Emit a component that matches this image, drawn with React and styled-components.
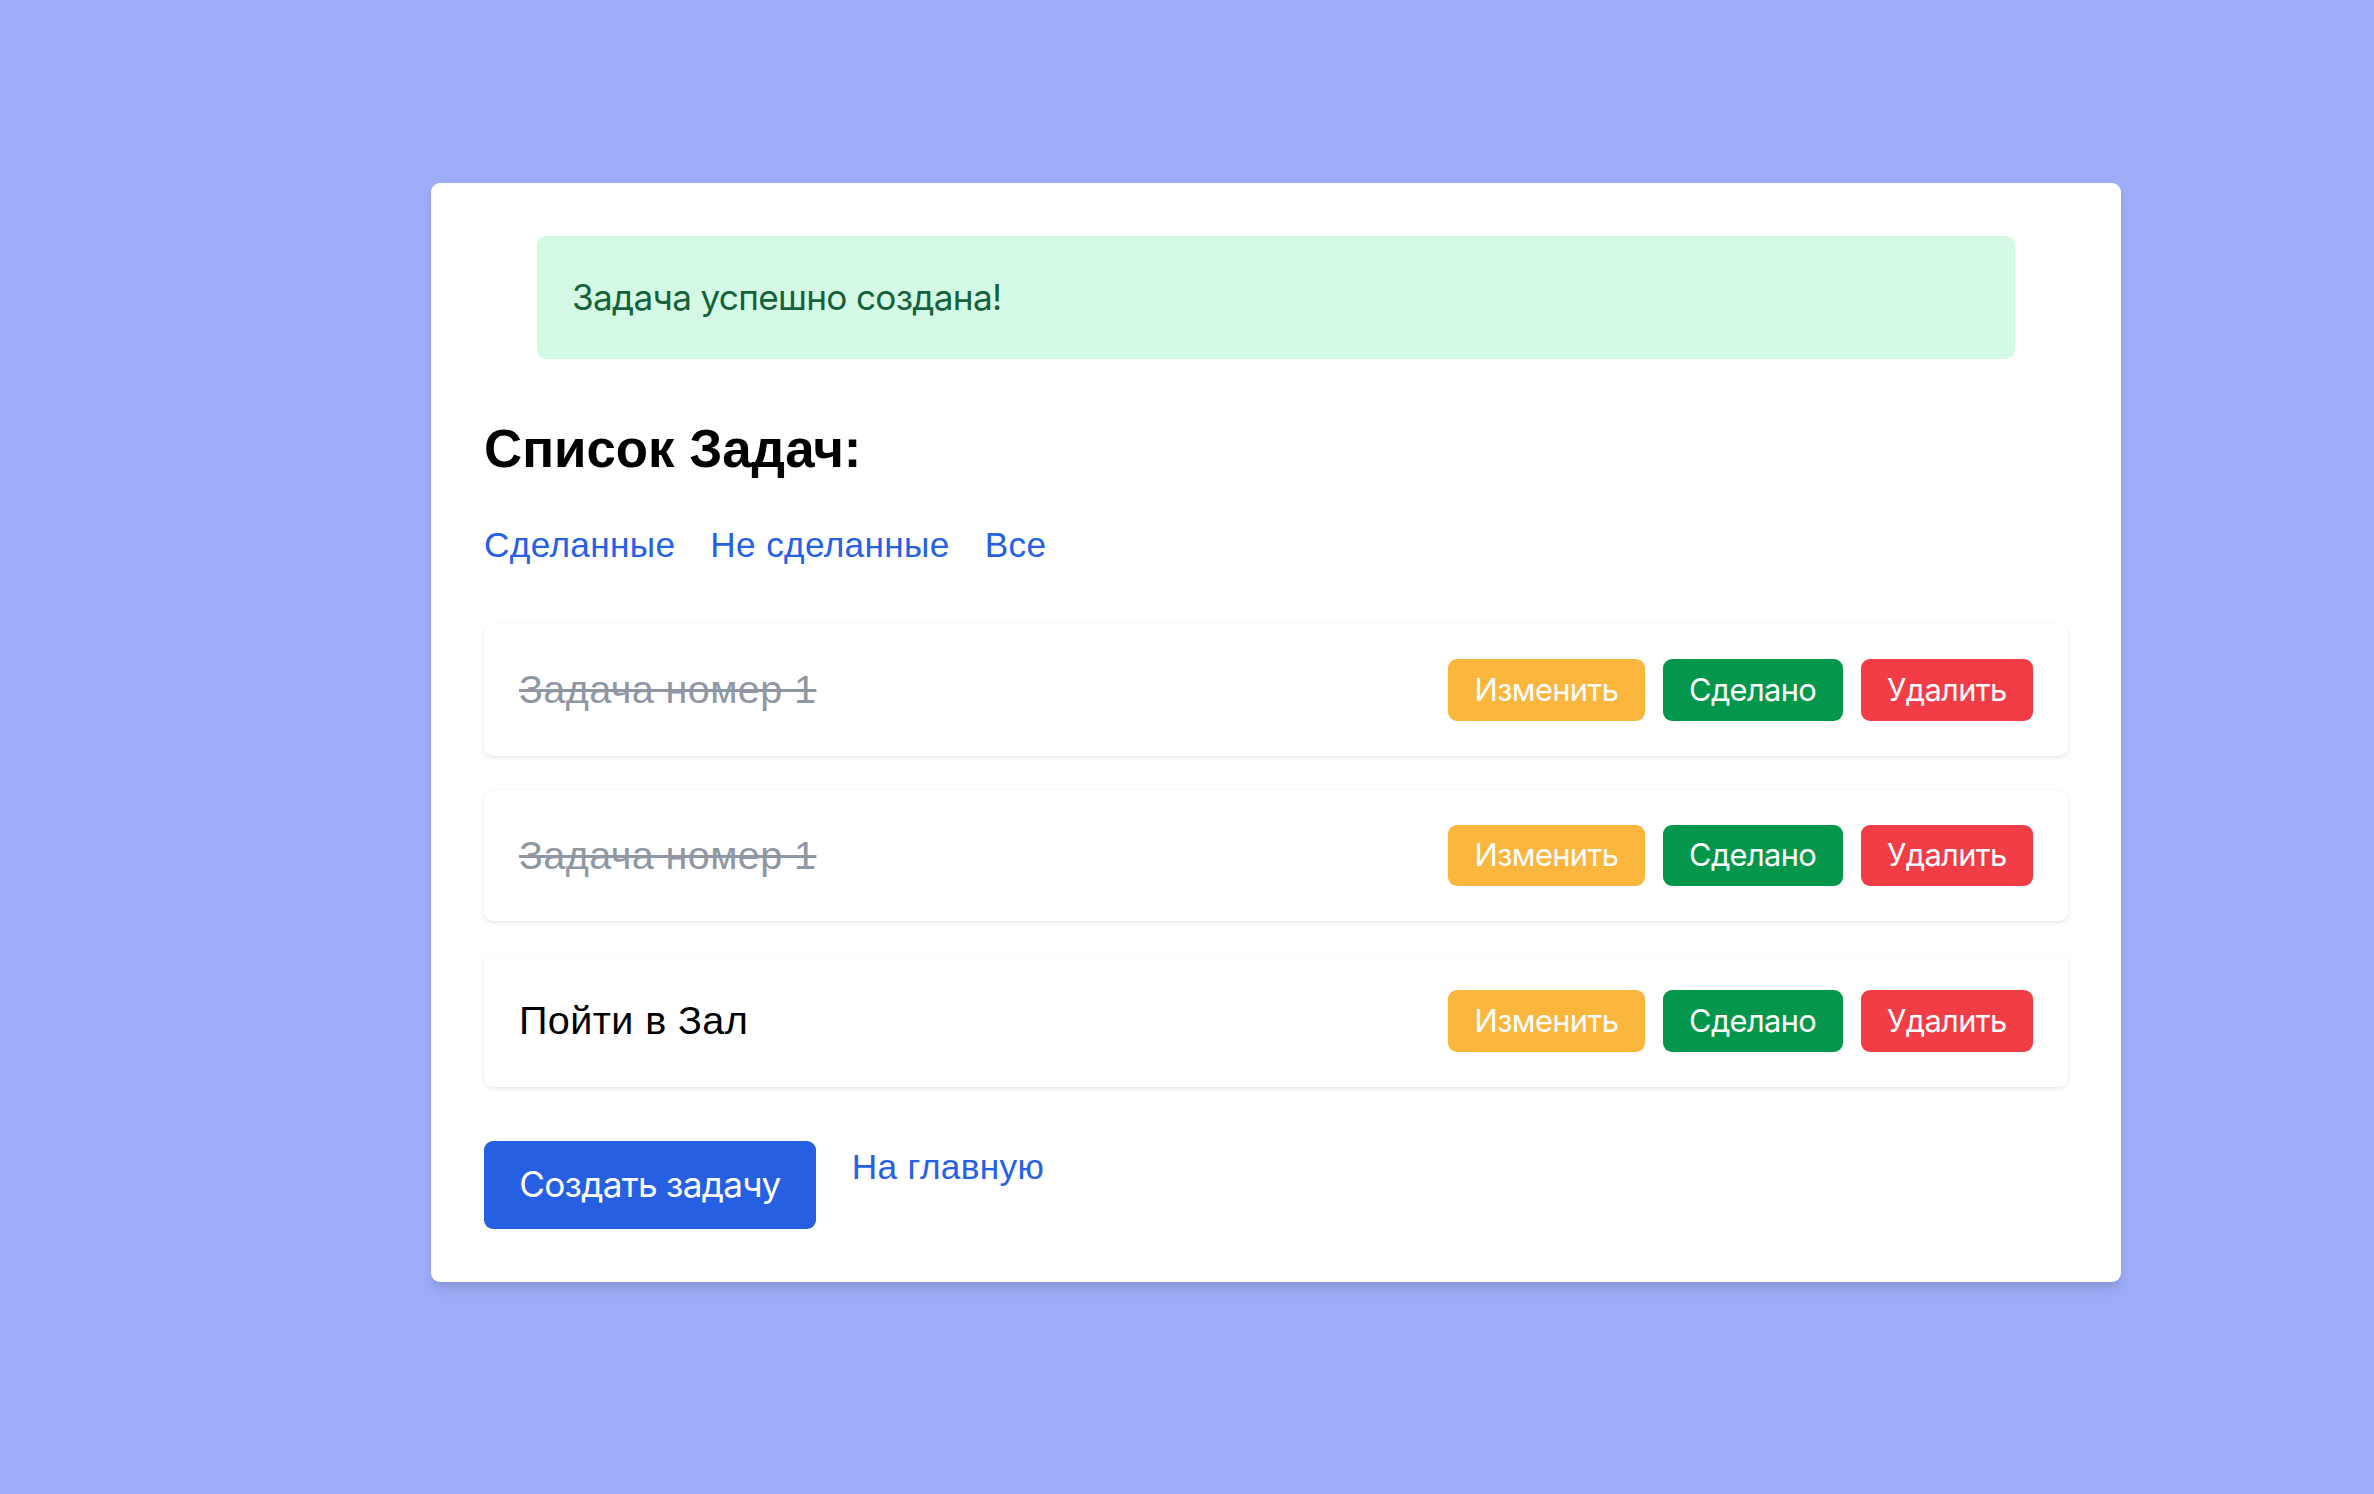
import React, { useState } from 'react';
import styled, { createGlobalStyle } from 'styled-components';

const GlobalStyle = createGlobalStyle`
  html, body {
    margin: 0;
    padding: 0;
    background: #9dacf7;
    min-height: 100%;
  }
  body {
    font-family: 'Liberation Sans', Arial, sans-serif;
  }
`;

const Page = styled.div`
  min-height: 100vh;
  padding: 183px 0 0 431px;
  box-sizing: border-box;
`;

const Card = styled.div`
  width: 1690px;
  box-sizing: border-box;
  padding: 53px;
  background: #fff;
  border-radius: 9px;
  box-shadow: 0 9px 13px -3px rgba(0, 0, 0, 0.1), 0 4px 9px -4px rgba(0, 0, 0, 0.1);
`;

const Alert = styled.div`
  margin: 0 53px;
  padding: 35px;
  background: #d4f9e4;
  color: #14613a;
  border-radius: 9px;
  font-family: Inter, 'Liberation Sans', sans-serif;
  font-size: 35.2px;
  line-height: 52.8px;
  letter-spacing: -0.02em;
`;

const Title = styled.h2`
  margin: 55px 0 35px;
  font-size: 52.8px;
  line-height: 70.4px;
  font-weight: 700;
  color: #000;
`;

const Filters = styled.nav`
  display: flex;
  gap: 35px;
  margin-bottom: 52px;
`;

const Link = styled.a`
  color: #2461e6;
  font-size: 35.2px;
  line-height: 52.8px;
  letter-spacing: 0.01em;
  text-decoration: none;
  cursor: pointer;
`;

const TaskList = styled.div`
  display: flex;
  flex-direction: column;
  gap: 34px;
`;

const Row = styled.div`
  display: flex;
  align-items: center;
  justify-content: space-between;
  padding: 35px;
  background: #fff;
  border-radius: 9px;
  box-shadow: 0 2px 5px rgba(0, 0, 0, 0.09), 0 0 2px rgba(0, 0, 0, 0.04);
`;

const TaskTitle = styled.span`
  font-size: 39.6px;
  line-height: 61.6px;
  letter-spacing: 0.01em;
  color: ${p => (p.done ? '#8f97a4' : '#000')};
  text-decoration: ${p => (p.done ? 'line-through' : 'none')};
`;

const Actions = styled.div`
  display: flex;
  gap: 18px;
`;

const colors = {
  edit: '#fab63d',
  done: '#02974b',
  remove: '#f23c46',
  primary: '#275fe3'
};

const Button = styled.button`
  border: none;
  border-radius: 9px;
  background: ${p => colors[p.kind]};
  color: #fff;
  font-family: Inter, 'Liberation Sans', sans-serif;
  font-size: ${p => (p.big ? '35.2px' : '30.8px')};
  line-height: ${p => (p.big ? '52.8px' : '44px')};
  letter-spacing: -0.02em;
  padding: ${p => (p.big ? '17.6px 35.2px' : '8.8px 26.4px')};
  cursor: pointer;
`;

const Footer = styled.div`
  display: flex;
  align-items: flex-start;
  gap: 36px;
  margin-top: 54px;
`;

const tasks = [
  { id: 1, title: 'Задача номер 1', done: true },
  { id: 2, title: 'Задача номер 1', done: true },
  { id: 3, title: 'Пойти в Зал', done: false }
];

export default function App() {
  const [list] = useState(tasks);

  return (
    <Page>
      <GlobalStyle />
      <Card>
        <Alert>Задача успешно создана!</Alert>
        <Title>Список Задач:</Title>
        <Filters>
          <Link>Сделанные</Link>
          <Link>Не сделанные</Link>
          <Link>Все</Link>
        </Filters>
        <TaskList>
          {list.map(task => (
            <Row key={task.id}>
              <TaskTitle done={task.done}>{task.title}</TaskTitle>
              <Actions>
                <Button kind='edit'>Изменить</Button>
                <Button kind='done'>Сделано</Button>
                <Button kind='remove'>Удалить</Button>
              </Actions>
            </Row>
          ))}
        </TaskList>
        <Footer>
          <Button kind='primary' big>
            Создать задачу
          </Button>
          <Link>На главную</Link>
        </Footer>
      </Card>
    </Page>
  );
}
